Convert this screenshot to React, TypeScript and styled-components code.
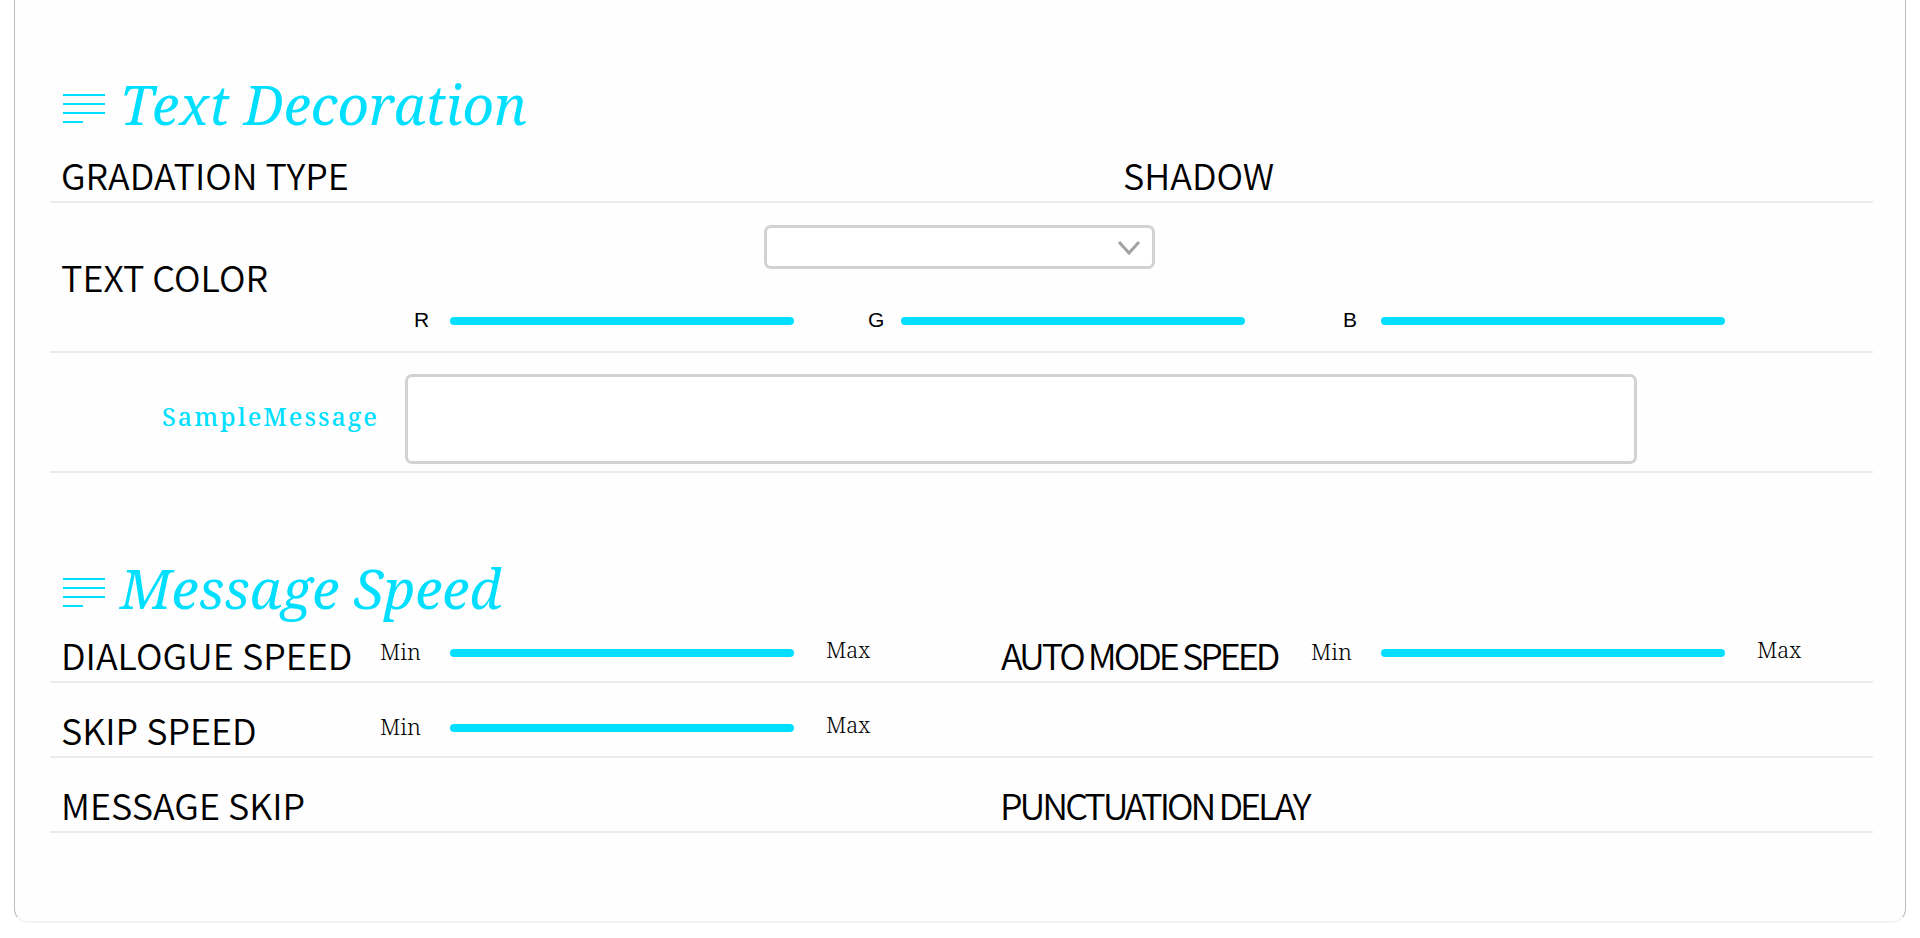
import React from "react";
import styled, { createGlobalStyle } from "styled-components";

const GlobalStyle = createGlobalStyle`
  * { box-sizing: border-box; }
  body { margin: 0; background: #fff; color: #000; }
`;

const accent = "#00dfff";
const sans = `"Noto Sans CJK JP", "Noto Sans", sans-serif`;
const serif = `"Noto Serif", "DejaVu Serif Condensed", serif`;

const Panel = styled.main`
  margin: 0 14px 16px;
  padding: 0 32px 88px 35px;
  background: #fefefe;
  border: 1px solid #bcbcbc;
  border-top: 0;
  border-bottom: 2px solid #f3f3f3;
  border-radius: 0 0 14px 14px;
`;

const Section = styled.section<{ $top: number }>`
  padding-top: ${(p) => p.$top}px;
`;

const Heading = styled.header`
  display: flex;
  align-items: center;
  gap: 15px;
  padding-left: 13px;
  height: 64px;
`;

const Lines = styled.svg`
  flex: none;
  margin-top: 2px;
`;

const Title = styled.h2`
  margin: 0;
  padding-bottom: 6px;
  font: italic 400 55px/64px ${serif};
  color: ${accent};
  white-space: nowrap;
`;

const Row = styled.div<{ $height: number; $columns: string; $align?: string }>`
  display: grid;
  grid-template-columns: ${(p) => p.$columns};
  align-items: ${(p) => p.$align ?? "end"};
  min-height: ${(p) => p.$height}px;
  padding-left: 11px;
  border-bottom: 2px solid #ebebeb;
`;

const Label = styled.label<{ $tight?: boolean }>`
  font: 350 36px/50px ${sans};
  padding-bottom: 2px;
  letter-spacing: ${(p) => (p.$tight ? "-3px" : "normal")};
  white-space: nowrap;
`;

const Bound = styled.span<{ $end?: boolean }>`
  padding: ${(p) => (p.$end ? "0 0 18px 32px" : "0 0 16px")};
  font: 300 22px/28px ${serif};
`;

const Range = styled.input`
  appearance: none;
  display: block;
  width: 344px;
  max-width: 100%;
  height: 8px;
  margin: 0;
  border-radius: 4px;
  background: ${accent};
  &::-webkit-slider-thumb { appearance: none; width: 0; height: 0; }
`;

const RangeCell = styled.div`
  padding-bottom: 24px;
`;

const Picker = styled.div`
  display: flex;
  flex-direction: column;
  gap: 41px;
  padding-top: 3px;
`;

const SelectBox = styled.div`
  position: relative;
  width: 391px;
  max-width: 100%;
  margin-left: 24%;
`;

const Select = styled.select`
  appearance: none;
  display: block;
  width: 100%;
  height: 44px;
  border: 3px solid #d2d2d2;
  border-radius: 7px;
  background: #fff;
`;

const Chevron = styled.svg`
  position: absolute;
  right: 14px;
  top: 14px;
  pointer-events: none;
`;

const Channels = styled.div`
  display: grid;
  grid-template-columns: 36fr 418fr 33fr 442fr 38fr 492fr;
  align-items: center;
`;

const Channel = styled.label`
  padding-bottom: 2px;
  font: 400 21px/20px "Liberation Sans", sans-serif;
`;

const SampleLabel = styled.label`
  padding: 8px 26px 0 0;
  font: 500 25px/32px ${serif};
  letter-spacing: 2px;
  color: ${accent};
  text-align: right;
`;

const Sample = styled.textarea`
  display: block;
  width: 100%;
  height: 90px;
  margin-top: 14px;
  padding: 12px;
  border: 3px solid #d2d2d2;
  border-radius: 7px;
  background: #fff;
  resize: none;
`;

const speedColumns = "319fr 70fr 344fr 207fr 310fr 70fr 344fr 148fr";

function SectionHeading({ children }: { children: React.ReactNode }) {
  return (
    <Heading>
      <Lines width="42" height="30" viewBox="0 0 42 30" stroke={accent} strokeWidth="2" aria-hidden="true">
        <path d="M0 2H42M0 11H42M0 20H42M0 29H20" />
      </Lines>
      <Title>{children}</Title>
    </Heading>
  );
}

function Speed({ id, label, tight }: { id: string; label: string; tight?: boolean }) {
  return (
    <>
      <Label htmlFor={id} $tight={tight}>{label}</Label>
      <Bound>Min</Bound>
      <RangeCell><Range id={id} type="range" /></RangeCell>
      <Bound $end>Max</Bound>
    </>
  );
}

export default function App() {
  return (
    <>
      <GlobalStyle />
      <Panel>
        <Section $top={75}>
          <SectionHeading>Text Decoration</SectionHeading>
          <Row $height={64} $columns="1062fr 750fr">
            <Label as="span">GRADATION TYPE</Label>
            <Label as="span">SHADOW</Label>
          </Row>
          <Row $height={150} $columns="353fr 1459fr" $align="center">
            <Label htmlFor="text-color">TEXT COLOR</Label>
            <Picker>
              <SelectBox>
                <Select id="text-color" />
                <Chevron width="24" height="18" viewBox="0 0 24 18" fill="none" stroke="#a2a2a2" strokeWidth="3" aria-hidden="true">
                  <path d="M2 3L12 14L22 3" />
                </Chevron>
              </SelectBox>
              <Channels>
                {["R", "G", "B"].map((name) => (
                  <React.Fragment key={name}>
                    <Channel htmlFor={`channel-${name}`}>{name}</Channel>
                    <Range id={`channel-${name}`} type="range" />
                  </React.Fragment>
                ))}
              </Channels>
            </Picker>
          </Row>
          <Row $height={120} $columns="344fr 1232fr 236fr" $align="center">
            <SampleLabel htmlFor="sample">SampleMessage</SampleLabel>
            <Sample id="sample" />
          </Row>
        </Section>
        <Section $top={86}>
          <SectionHeading>Message Speed</SectionHeading>
          <Row $height={60} $columns={speedColumns}>
            <Speed id="dialogue-speed" label="DIALOGUE SPEED" />
            <Speed id="auto-speed" label="AUTO MODE SPEED" tight />
          </Row>
          <Row $height={75} $columns={speedColumns}>
            <Speed id="skip-speed" label="SKIP SPEED" />
          </Row>
          <Row $height={75} $columns="939fr 873fr">
            <Label as="span">MESSAGE SKIP</Label>
            <Label as="span" $tight>PUNCTUATION DELAY</Label>
          </Row>
        </Section>
      </Panel>
    </>
  );
}
